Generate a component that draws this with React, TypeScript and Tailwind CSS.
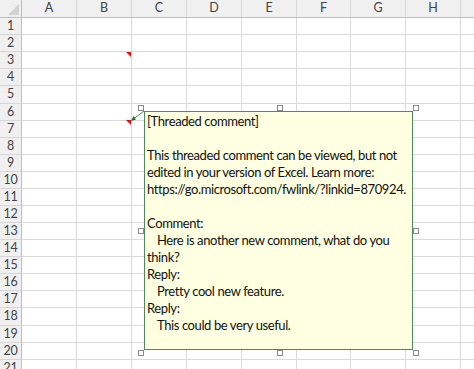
import React from "react";

const cols = [
  { l: "A", w: "w-[55px]" },
  { l: "B", w: "w-[55px]" },
  { l: "C", w: "w-[55px]" },
  { l: "D", w: "w-[55px]" },
  { l: "E", w: "w-[55px]" },
  { l: "F", w: "w-[54px]" },
  { l: "G", w: "w-[55px]" },
  { l: "H", w: "w-[55px]" },
  { l: "", w: "w-[40px]" },
];

const rows = [
  { n: 1, h: "h-[17px]" },
  { n: 2, h: "h-[17px]" },
  { n: 3, h: "h-[17px]" },
  { n: 4, h: "h-[17px]" },
  { n: 5, h: "h-[18px]" },
  { n: 6, h: "h-[17px]" },
  { n: 7, h: "h-[17px]" },
  { n: 8, h: "h-[17px]" },
  { n: 9, h: "h-[17px]" },
  { n: 10, h: "h-[17px]" },
  { n: 11, h: "h-[17px]" },
  { n: 12, h: "h-[17px]" },
  { n: 13, h: "h-[17px]" },
  { n: 14, h: "h-[17px]" },
  { n: 15, h: "h-[17px]" },
  { n: 16, h: "h-[17px]" },
  { n: 17, h: "h-[17px]" },
  { n: 18, h: "h-[18px]" },
  { n: 19, h: "h-[17px]" },
  { n: 20, h: "h-[17px]" },
  { n: 21, h: "h-[17px]" },
];

const lines: { t: string; indent?: boolean }[] = [
  { t: "[Threaded comment]" },
  { t: "" },
  { t: "This threaded comment can be viewed, but not" },
  { t: "edited in your version of Excel. Learn more:" },
  { t: "https://go.microsoft.com/fwlink/?linkid=870924." },
  { t: "" },
  { t: "Comment:" },
  { t: "Here is another new comment, what do you", indent: true },
  { t: "think?" },
  { t: "Reply:" },
  { t: "Pretty cool new feature.", indent: true },
  { t: "Reply:" },
  { t: "This could be very useful.", indent: true },
];

const handles = [
  "left-[138px] top-[105px]",
  "left-[277px] top-[105px]",
  "left-[413px] top-[105px]",
  "left-[138px] top-[228px]",
  "left-[413px] top-[228px]",
  "left-[138px] top-[350px]",
  "left-[277px] top-[350px]",
  "left-[413px] top-[350px]",
];

export default function App() {
  return (
    <div className="relative w-[474px] h-[369px] overflow-hidden bg-white font-['Lato','Liberation_Sans',sans-serif]">
      {/* column header */}
      <div className="flex h-[18px] bg-[#f0f0f0] border-b border-[#bfbfbf]">
        <div className="relative w-[22px] shrink-0 border-r border-[#bfbfbf]">
          <svg className="absolute left-0 top-0" width="22" height="17" viewBox="0 0 22 17">
            <polygon points="19,4 19,15 8,15" fill="#d2d2d2" />
          </svg>
        </div>
        {cols.map((c, i) => (
          <div
            key={i}
            className={`${c.w} shrink-0 flex items-center justify-center border-r border-[#d6d6d6] text-[12.5px] leading-none text-[#444]`}
          >
            {c.l}
          </div>
        ))}
      </div>
      {rows.map((r) => (
        <div key={r.n} className={`flex ${r.h}`}>
          <div className="w-[22px] shrink-0 flex items-center justify-center bg-[#f0f0f0] border-r border-b border-r-[#bfbfbf] border-b-[#d6d6d6] text-[12.5px] tracking-[-0.2px] leading-none text-[#444]">
            {r.n}
          </div>
          {cols.map((c, i) => (
            <div key={i} className={`${c.w} shrink-0 border-r border-b border-[#dadada]`} />
          ))}
        </div>
      ))}

      {/* comment indicators */}
      <svg className="absolute left-[125px] top-[51px]" width="8" height="8" viewBox="0 0 8 8">
        <polygon points="1,1 6,1 6,6" fill="#e01010" />
      </svg>
      <svg className="absolute left-[125px] top-[103px]" width="22" height="24" viewBox="0 0 22 24">
        <polygon points="1,17 6,17 6,22" fill="#e01010" />
        <line x1="19" y1="8" x2="9" y2="15.5" stroke="#3d8c5c" strokeWidth="1" />
        <polygon points="6,18 8.5,13 11,16.5" fill="#1f6b3a" />
      </svg>

      {/* comment box */}
      <div className="absolute left-[144px] top-[111px] w-[269px] h-[239px] border border-[#4e8a5e] bg-[#ffffe1] pl-[2px] pt-[1px] text-[13px] tracking-[-0.4px] leading-[17px] text-[#111]">
        {lines.map((l, i) => (
          <div key={i} className={`h-[17px] whitespace-nowrap ${l.indent ? "pl-[10px]" : ""}`}>
            {l.t}
          </div>
        ))}
      </div>

      {handles.map((h, i) => (
        <div key={i} className={`absolute ${h} w-[6px] h-[6px] border border-[#8a8a8a] bg-white`} />
      ))}
    </div>
  );
}
